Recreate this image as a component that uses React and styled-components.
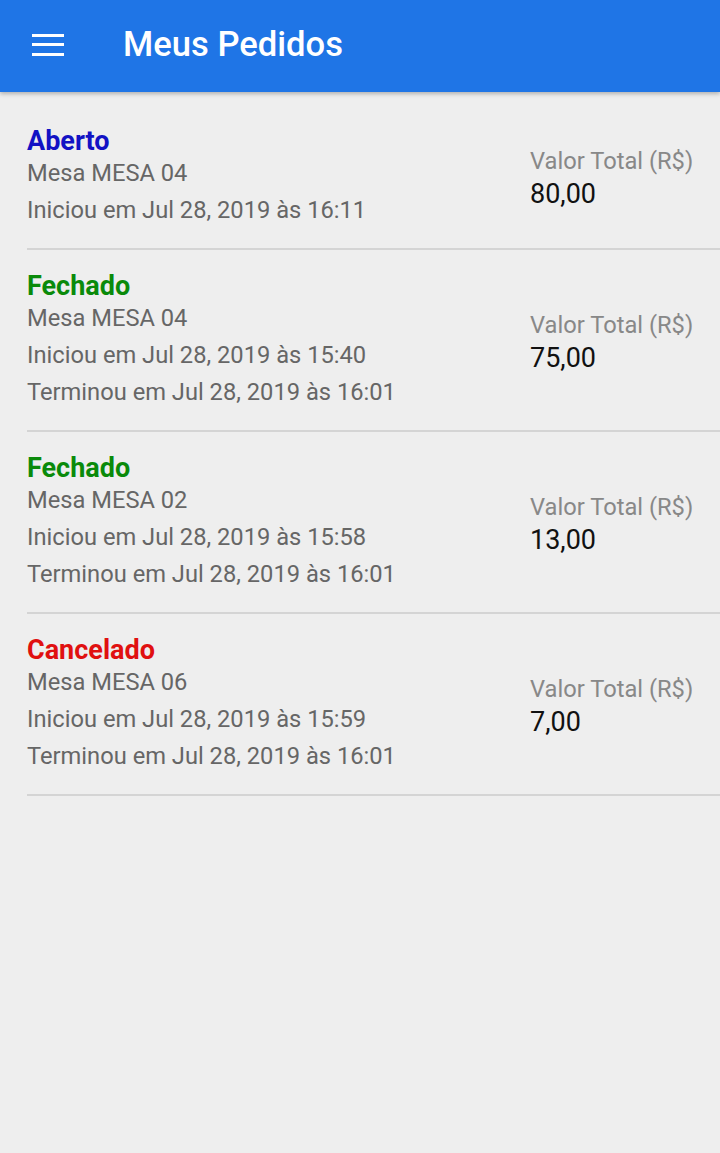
import React from 'react';
import styled, { createGlobalStyle } from 'styled-components';

const GlobalStyle = createGlobalStyle`
    html, body {
        margin: 0;
        padding: 0;
        background-color: #eeeeee;
        font-family: Roboto, "Liberation Sans", sans-serif;
    }
`;

const Page = styled.div`
    width: 720px;
    min-height: 1153px;
    background-color: #eeeeee;
`;

const Toolbar = styled.header`
    height: 92px;
    display: flex;
    align-items: center;
    background-color: #1f75e6;
    box-shadow: 0 2px 4px rgba(0, 0, 0, 0.25);
`;

const MenuButton = styled.button`
    width: 32px;
    height: 22px;
    margin: 0 0 3px 32px;
    padding: 0;
    border: none;
    background: transparent;
    display: flex;
    flex-direction: column;
    justify-content: space-between;
    cursor: pointer;

    span {
        display: block;
        height: 3px;
        background-color: #fff;
    }
`;

const Title = styled.h1`
    margin: 0 0 4px 59px;
    color: #fff;
    font-size: 34.6px;
    font-weight: 500;
`;

const OrderList = styled.ul`
    list-style: none;
    margin: 0;
    padding: 13px 0 0 0;
`;

const OrderRow = styled.li`
    margin-left: 27px;
    padding: 22px 27px 19px 0;
    display: flex;
    align-items: center;
    justify-content: space-between;
    border-bottom: 2px solid #d4d4d4;
`;

const Info = styled.div`
    display: flex;
    flex-direction: column;
`;

const Status = styled.div`
    font-size: 27px;
    font-weight: 700;
    line-height: 28px;
    color: ${(p) => p.color};
`;

const Detail = styled.div`
    font-size: 23.7px;
    line-height: 37px;
    color: #666;
`;

const Total = styled.div`
    display: flex;
    flex-direction: column;
    width: 163px;
`;

const TotalLabel = styled.div`
    font-size: 23.7px;
    line-height: 33px;
    color: #888;
    white-space: nowrap;
`;

const TotalValue = styled.div`
    font-size: 27px;
    line-height: 33px;
    color: #111;
`;

const statusColors = {
    Aberto: '#1212c4',
    Fechado: '#0a8a0a',
    Cancelado: '#e01010'
};

const orders = [
    { status: 'Aberto', mesa: 'MESA 04', inicio: '16:11', total: '80,00' },
    { status: 'Fechado', mesa: 'MESA 04', inicio: '15:40', fim: '16:01', total: '75,00' },
    { status: 'Fechado', mesa: 'MESA 02', inicio: '15:58', fim: '16:01', total: '13,00' },
    { status: 'Cancelado', mesa: 'MESA 06', inicio: '15:59', fim: '16:01', total: '7,00' }
];

const App = () => {
    return (
        <Page>
            <GlobalStyle />
            <Toolbar>
                <MenuButton aria-label="menu">
                    <span />
                    <span />
                    <span />
                </MenuButton>
                <Title>Meus Pedidos</Title>
            </Toolbar>
            <OrderList>
                {orders.map((order, index) => (
                    <OrderRow key={index}>
                        <Info>
                            <Status color={statusColors[order.status]}>{order.status}</Status>
                            <Detail>Mesa {order.mesa}</Detail>
                            <Detail>Iniciou em Jul 28, 2019 às {order.inicio}</Detail>
                            {order.fim && <Detail>Terminou em Jul 28, 2019 às {order.fim}</Detail>}
                        </Info>
                        <Total>
                            <TotalLabel>Valor Total (R$)</TotalLabel>
                            <TotalValue>{order.total}</TotalValue>
                        </Total>
                    </OrderRow>
                ))}
            </OrderList>
        </Page>
    );
};

export default App;
